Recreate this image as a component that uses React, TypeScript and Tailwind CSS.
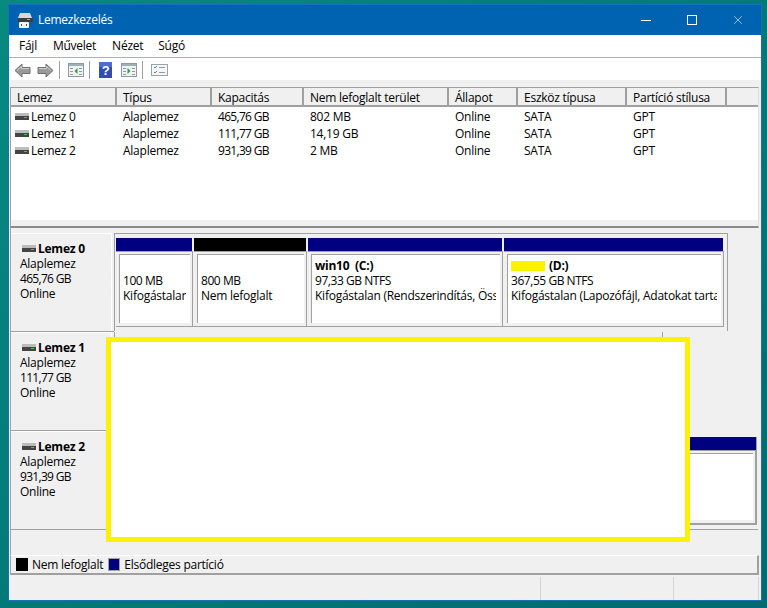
import { X } from 'lucide-react';

const columns = [
  { label: 'Lemez', width: 'w-[106px]' },
  { label: 'Típus', width: 'w-[95px]' },
  { label: 'Kapacitás', width: 'w-[92px]' },
  { label: 'Nem lefoglalt terület', width: 'w-[145px]' },
  { label: 'Állapot', width: 'w-[69px]' },
  { label: 'Eszköz típusa', width: 'w-[109px]' },
  { label: 'Partíció stílusa', width: 'w-[100px]' },
];

const rows = [
  ['Lemez 0', 'Alaplemez', '465,76 GB', '802 MB', 'Online', 'SATA', 'GPT'],
  ['Lemez 1', 'Alaplemez', '111,77 GB', '14,19 GB', 'Online', 'SATA', 'GPT'],
  ['Lemez 2', 'Alaplemez', '931,39 GB', '2 MB', 'Online', 'SATA', 'GPT'],
];

// digits are wider than the original UI font, so number cells get tighter tracking
const numeric = 'tracking-[-0.7px]';

function DiskIcon() {
  return (
    <svg width="14" height="7" viewBox="0 0 14 7" className="shrink-0">
      <rect x="0" y="0" width="14" height="3" fill="#bcbcbc" />
      <rect x="0" y="3" width="14" height="4" fill="#444444" />
      <rect x="9" y="4" width="3" height="1" fill="#35d04a" />
    </svg>
  );
}

function TitleIcon() {
  return (
    <svg width="16" height="16" viewBox="0 0 16 16">
      <path d="M3 1h10l2 5H1z" fill="#d8d8d8" />
      <rect x="1" y="6" width="15" height="4" fill="#3d3d3d" />
      <rect x="10" y="7" width="3" height="1" fill="#3de05a" />
      <rect x="2" y="10" width="10" height="6" rx="1" fill="#f4f4f4" />
      <rect x="4" y="12" width="1" height="2" fill="#555" />
      <rect x="9" y="12" width="1" height="2" fill="#555" />
    </svg>
  );
}

function ArrowIcon({ flip }: { flip?: boolean }) {
  return (
    <svg width="17" height="15" viewBox="0 0 17 15" className={flip ? '-scale-x-100' : ''}>
      <path d="M1 7.500 8 1v3.500h8v6H8V14z" fill="#9a9a9a" stroke="#6f6f6f" />
      <path d="M3 7.500 7.500 3.500v2h7.500" fill="none" stroke="#d0d0d0" />
    </svg>
  );
}

function PaneIcon({ arrow }: { arrow: 'left' | 'right' }) {
  return (
    <svg width="16" height="14" viewBox="0 0 16 14">
      <rect x="0.500" y="0.500" width="15" height="13" fill="#f2f2f2" stroke="#8d9aa0" />
      <rect x="1" y="1" width="14" height="2" fill="#9fb1b8" />
      <rect x="2" y="5" width="3" height="1" fill="#8d9aa0" />
      <rect x="2" y="8" width="3" height="1" fill="#8d9aa0" />
      <rect x="2" y="11" width="3" height="1" fill="#8d9aa0" />
      <rect x="11" y="5" width="3" height="1" fill="#8d9aa0" />
      <rect x="11" y="8" width="3" height="1" fill="#8d9aa0" />
      <rect x="11" y="11" width="3" height="1" fill="#8d9aa0" />
      {arrow === 'left' ? <path d="M9.500 5v6l-3-3z" fill="#2f9e44" /> : <path d="M6.500 5v6l3-3z" fill="#2f9e44" />}
    </svg>
  );
}

function HelpIcon() {
  return (
    <svg width="13" height="16" viewBox="0 0 13 16">
      <rect width="13" height="16" fill="#2f4fae" />
      <rect x="0" y="0" width="13" height="5" fill="#4b6fd0" />
      <text x="6.500" y="13" textAnchor="middle" fontSize="13" fontWeight="700" fill="#fff" fontFamily="Liberation Sans, sans-serif">?</text>
    </svg>
  );
}

function ChecklistIcon() {
  return (
    <svg width="17" height="12" viewBox="0 0 17 12">
      <rect x="0.500" y="0.500" width="16" height="11" fill="#f6f6f6" stroke="#98a4aa" />
      <path d="M3 3l1 1 2-2M3 8l1 1 2-2" fill="none" stroke="#4a86c8" />
      <rect x="8" y="3" width="6" height="1" fill="#8d9aa0" />
      <rect x="8" y="8" width="6" height="1" fill="#8d9aa0" />
    </svg>
  );
}

function DiskLabel({ name, size }: { name: string; size: string }) {
  return (
    <div className="w-[103px] shrink-0 border-b border-[#a0a0a0]">
      <div className="mr-[2px] h-full border-t border-r border-white pt-[7px] pl-[9px]">
        <div className="flex h-[15px] items-center gap-[2px] pl-[2px] font-bold">
          <DiskIcon />
          <span>{name}</span>
        </div>
        <div className="leading-[15px]">Alaplemez</div>
        <div className={`leading-[15px] ${numeric}`}>{size}</div>
        <div className="leading-[15px]">Online</div>
      </div>
    </div>
  );
}

function Partition({
  width,
  bar,
  title,
  lines,
  marker,
}: {
  width: string;
  bar: string;
  title?: string;
  lines: string[];
  marker?: boolean;
}) {
  return (
    <div className={`${width} flex h-full shrink-0 flex-col`}>
      <div className={`h-[13px] shrink-0 ${bar}`} />
      <div className="min-h-0 flex-1 border-t border-r border-[#a0a0a0] pt-[2px] pr-[2px] pb-[3px] pl-[3px]">
        <div className="h-full border-t border-l border-[#a0a0a0] bg-white pt-[3px] pr-[4px] pl-[3px] leading-[15px]">
          <div className="overflow-hidden whitespace-pre">
            <div className="flex h-[15px] items-center font-bold">
              {marker && <span className="mr-[4px] h-[10px] w-[34px] bg-[#fff200]" />}
              {title}
            </div>
            {lines.map((line, i) => (
              <div key={line} className={i === 0 ? 'tracking-[-0.45px]' : ''}>
                {line}
              </div>
            ))}
          </div>
        </div>
      </div>
    </div>
  );
}

export default function App() {
  return (
    <div className="relative h-[608px] w-[767px] overflow-hidden bg-linear-to-br from-[#078a80] to-[#026a70] pt-[4px] pr-[5px] pb-[7px] pl-[8px] font-['Open_Sans','Noto_Sans',sans-serif] text-[12px] tracking-[-0.25px] text-black">
      <div className="flex h-full flex-col border border-[#1a6fb5] bg-[#f0f0f0]">
        <div className="flex h-[30px] shrink-0 items-center bg-[#0063b1] pl-[8px] text-white">
          <TitleIcon />
          <span className="ml-[5px]">Lemezkezelés</span>
          <div className="ml-auto flex items-center">
            <div className="flex w-[46px] justify-center"><div className="h-px w-[10px] bg-white" /></div>
            <div className="flex w-[46px] justify-center"><div className="h-[10px] w-[10px] border border-white" /></div>
            <div className="flex w-[46px] justify-center"><X size={14} strokeWidth={1} color="white" /></div>
          </div>
        </div>

        <div className="flex h-[23px] shrink-0 items-center gap-[15px] border-b border-[#b0b0b0] bg-white pl-[10px]">
          <span>Fájl</span>
          <span className="ml-[1px]">Művelet</span>
          <span className="ml-[1px]">Nézet</span>
          <span>Súgó</span>
        </div>

        <div className="flex h-[22px] shrink-0 items-center bg-white pt-[2px] pl-[5px]">
          <ArrowIcon />
          <div className="ml-[6px]"><ArrowIcon flip /></div>
          <div className="ml-[5px] h-[18px] w-px bg-[#a0a0a0]" />
          <div className="ml-[8px]"><PaneIcon arrow="left" /></div>
          <div className="ml-[5px] h-[18px] w-px bg-[#a0a0a0]" />
          <div className="ml-[9px]"><HelpIcon /></div>
          <div className="ml-[9px]"><PaneIcon arrow="right" /></div>
          <div className="ml-[5px] h-[18px] w-px bg-[#a0a0a0]" />
          <div className="ml-[8px]"><ChecklistIcon /></div>
        </div>

        <div className="h-[7px] shrink-0" />

        <div className="mr-[2px] ml-px flex h-[141px] shrink-0 flex-col border-t border-r border-b-2 border-l border-[#a0a0a0] border-r-[#e0e0e0] border-b-[#8a8a8a]">
          <div className="flex h-[19px] shrink-0 border-b-2 border-[#a0a0a0] bg-[#f0f0f0]">
            {columns.map((col) => (
              <div key={col.label} className={`${col.width} flex shrink-0 items-center border-r-2 border-[#a0a0a0] pt-[3px] pl-[6px] leading-none`}>
                {col.label}
              </div>
            ))}
            <div className="flex-1" />
          </div>
          <div className="flex-1 bg-white pt-px">
            {rows.map((row) => (
              <div key={row[0]} className="flex h-[17px] items-center">
                {row.map((cell, i) =>
                  i === 0 ? (
                    <div key={i} className="flex w-[106px] shrink-0 items-center gap-[2px] pl-[4px]">
                      <DiskIcon />
                      <span>{cell}</span>
                    </div>
                  ) : (
                    <div key={i} className={`${columns[i].width} shrink-0 pl-[6px] ${i === 2 ? numeric : ''}`}>
                      {cell}
                    </div>
                  ),
                )}
              </div>
            ))}
          </div>
          <div className="h-[6px] shrink-0 bg-[#f0f0f0]" />
        </div>

        <div className="ml-px min-h-0 flex-1 border-l border-[#a0a0a0] pt-[5px]">
          <div className="flex h-[99px]">
            <DiskLabel name="Lemez 0" size="465,76 GB" />
            <div className="flex h-[98px] w-[614px] flex-col border-t border-r border-l border-[#a0a0a0] pt-[4px] pr-[3px] pl-px">
              <div className="flex h-[89px] border-b border-[#a0a0a0]">
                <Partition width="mr-px w-[77px]" bar="mr-px bg-[#000080]" lines={['100 MB', 'Kifogástalan (Rendszer']} />
                <Partition width="mr-px w-[113px]" bar="mr-px bg-black" lines={['800 MB', 'Nem lefoglalt']} />
                <Partition width="mr-px w-[195px]" bar="mr-px bg-[#000080]" title="win10  (C:)" lines={['97,33 GB NTFS', 'Kifogástalan (Rendszerindítás, Összeomlási']} />
                <Partition width="w-[220px]" bar="mr-px bg-[#000080]" title="(D:)" marker lines={['367,55 GB NTFS', 'Kifogástalan (Lapozófájl, Adatokat tartalmazó']} />
              </div>
            </div>
          </div>

          <div className="flex h-[99px]">
            <DiskLabel name="Lemez 1" size="111,77 GB" />
            <div className="h-[98px] w-[549px] border-x border-[#a0a0a0]" />
          </div>

          <div className="flex h-[99px]">
            <DiskLabel name="Lemez 2" size="931,39 GB" />
            <div className="flex h-[99px] w-[644px] flex-col border-b border-[#a0a0a0] pt-[6px]">
              <div className="mr-px h-[88px] border-r border-b-2 border-[#a0a0a0]">
                <Partition width="w-full" bar="bg-[#000080]" lines={[]} />
              </div>
            </div>
          </div>
        </div>

        <div className="mr-[2px] ml-px flex h-[20px] shrink-0 items-center border-t border-r-2 border-b-2 border-l border-t-white border-r-[#a0a0a0] border-b-[#a0a0a0] border-l-[#a0a0a0] pl-[5px]">
          <div className="h-[13px] w-[12px] bg-black" />
          <span className="ml-[4px]">Nem lefoglalt</span>
          <div className="ml-[5px] h-[13px] w-[12px] border border-[#a0a0a0] bg-[#000080]" />
          <span className="ml-[4px]">Elsődleges partíció</span>
        </div>

        <div className="mt-[2px] flex h-[23px] shrink-0 pr-[2px]">
          <div className="w-[532px] border-r border-[#d4d4d4]" />
          <div className="w-[133px] border-r border-[#d4d4d4]" />
          <div className="w-[85px] border-r border-[#d4d4d4]" />
        </div>
      </div>

      <div className="absolute top-[337px] left-[106px] h-[205px] w-[584px] border-[5px] border-[#fff200] bg-white" />
    </div>
  );
}
